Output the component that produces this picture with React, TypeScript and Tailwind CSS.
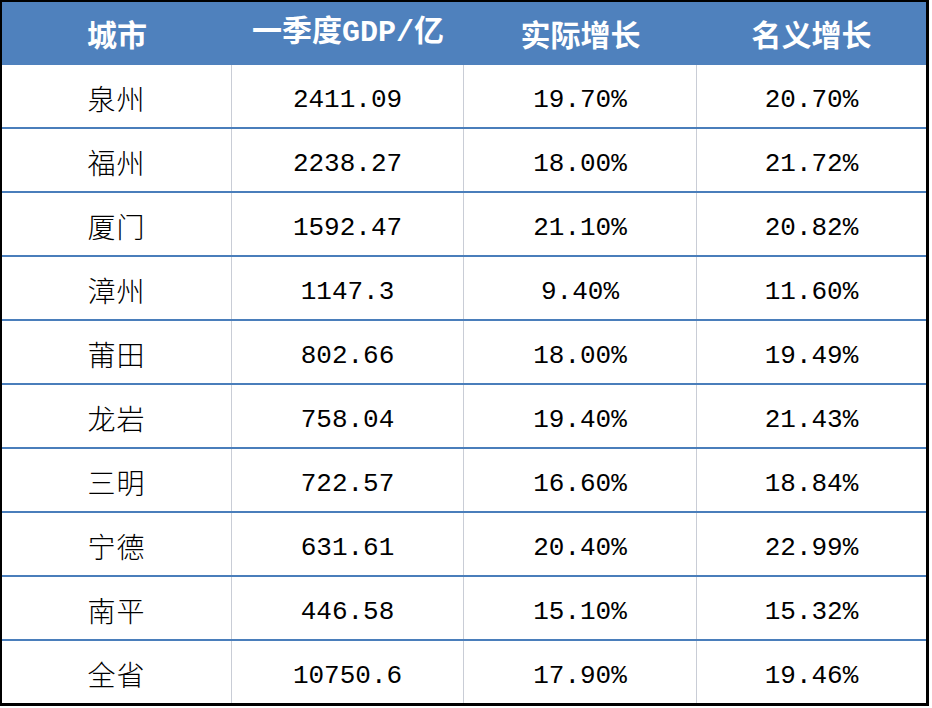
const rows: [string, string, string, string][] = [
  ['泉州', '2411.09', '19.70%', '20.70%'],
  ['福州', '2238.27', '18.00%', '21.72%'],
  ['厦门', '1592.47', '21.10%', '20.82%'],
  ['漳州', '1147.3', '9.40%', '11.60%'],
  ['莆田', '802.66', '18.00%', '19.49%'],
  ['龙岩', '758.04', '19.40%', '21.43%'],
  ['三明', '722.57', '16.60%', '18.84%'],
  ['宁德', '631.61', '20.40%', '22.99%'],
  ['南平', '446.58', '15.10%', '15.32%'],
  ['全省', '10750.6', '17.90%', '19.46%'],
];

const grid = 'grid grid-cols-[230px_232px_233px_229px]';
const cjk = "font-['Noto_Sans_CJK_SC',sans-serif]";
const mono = "font-['Liberation_Mono','Noto_Sans_CJK_SC',monospace]";

export default function App() {
  return (
    <div className="h-[708px] w-[932px] bg-white">
      <div className="w-[929px] border-b-[3px] border-l-2 border-r-[3px] border-t-2 border-black bg-white">
        <div className={`${grid} h-[63px] bg-[#4f81bd] text-[30px] font-bold text-white`}>
          <div className={`flex items-center justify-center ${cjk}`}>城市</div>
          <div className={`flex items-center justify-center ${mono}`}>一季度GDP/亿</div>
          <div className={`flex items-center justify-center ${cjk}`}>实际增长</div>
          <div className={`flex items-center justify-center ${cjk}`}>名义增长</div>
        </div>
        {rows.map((r, i) => (
          <div
            key={r[0]}
            className={`${grid} ${i < rows.length - 1 ? 'h-[64px] border-b-2 border-[#4a7ebb]' : 'h-[62px]'} text-black`}
          >
            <div className={`flex items-center justify-center border-r border-[#c9cdd6] pt-1 text-[28px] font-light tracking-[1px] ${cjk}`}>
              {r[0]}
            </div>
            <div className={`flex items-center justify-center border-r border-[#c9cdd6] pt-2 text-[26px] ${mono}`}>
              {r[1]}
            </div>
            <div className={`flex items-center justify-center border-r border-[#c9cdd6] pt-2 text-[26px] ${mono}`}>
              {r[2]}
            </div>
            <div className={`flex items-center justify-center pt-2 text-[26px] ${mono}`}>{r[3]}</div>
          </div>
        ))}
      </div>
    </div>
  );
}
